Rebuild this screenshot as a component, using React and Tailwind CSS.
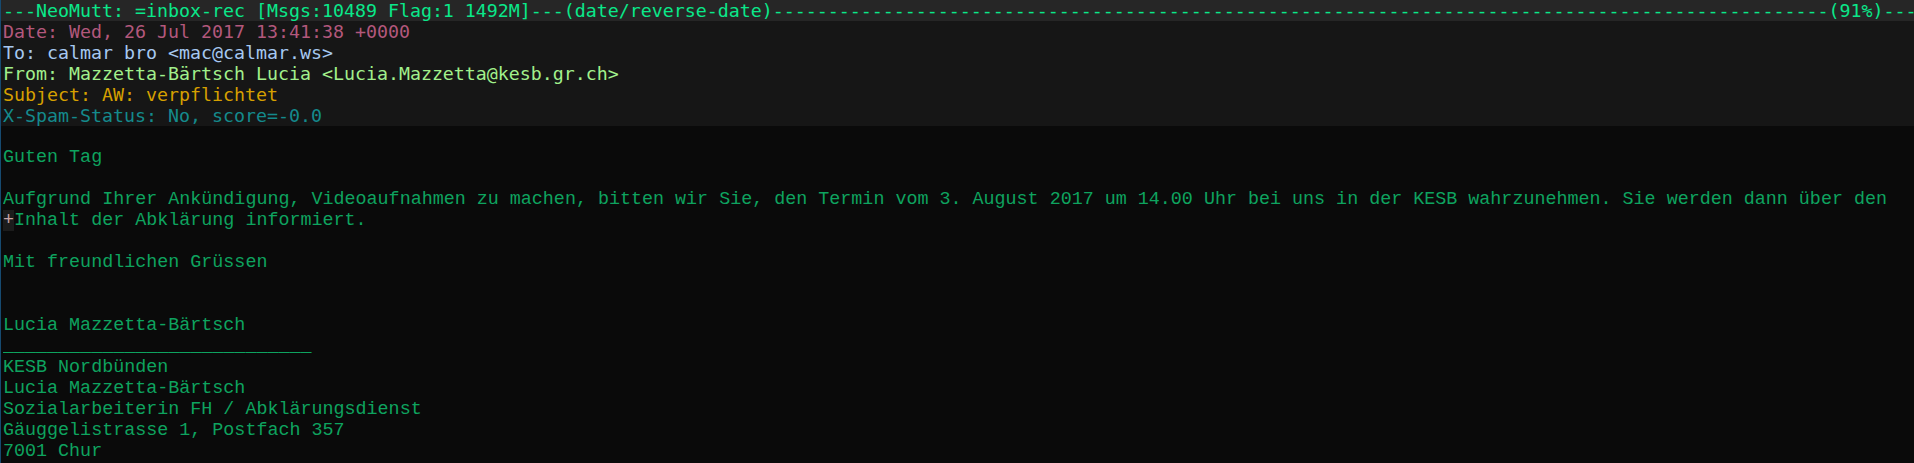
export default function App() {
  const status =
    "---NeoMutt: =inbox-rec [Msgs:10489 Flag:1 1492M]---(date/reverse-date)" +
    "-".repeat(96) +
    "(91%)---";
  const hdrFont = { fontFamily: '"DejaVu Sans Mono", monospace' };
  const row = "h-[21px] leading-[21px] whitespace-pre overflow-hidden";
  const body = [
    "",
    "Guten Tag",
    "",
    "Aufgrund Ihrer Ankündigung, Videoaufnahmen zu machen, bitten wir Sie, den Termin vom 3. August 2017 um 14.00 Uhr bei uns in der KESB wahrzunehmen. Sie werden dann über den",
    "+",
    "",
    "Mit freundlichen Grüssen",
    "",
    "",
    "Lucia Mazzetta-Bärtsch",
    "____________________________",
    "KESB Nordbünden",
    "Lucia Mazzetta-Bärtsch",
    "Sozialarbeiterin FH / Abklärungsdienst",
    "Gäuggelistrasse 1, Postfach 357",
    "7001 Chur",
  ];
  return (
    <div className="w-[1914px] h-[463px] bg-[#0a0a0a] border-l border-[#164a70] overflow-hidden text-[18.38px] font-['Liberation_Mono',monospace]">
      <div className={`${row} text-[18.28px] bg-[#262626] text-[#0ae88a] pl-[2px]`} style={hdrFont}>
        {status}
      </div>
      <div className="bg-[#161616] pl-[2px] text-[18.28px]" style={hdrFont}>
        <div className={`${row} text-[#b3587c]`}>Date: Wed, 26 Jul 2017 13:41:38 +0000</div>
        <div className={`${row} text-[#a6c8f0]`}>To: calmar bro &lt;mac@calmar.ws&gt;</div>
        <div className={`${row} text-[#a2f08c]`}>From: Mazzetta-Bärtsch Lucia &lt;Lucia.Mazzetta@kesb.gr.ch&gt;</div>
        <div className={`${row} text-[#d6a000]`}>Subject: AW: verpflichtet</div>
        <div className={`${row} text-[#148a8c]`}>X-Spam-Status: No, score=-0.0</div>
      </div>
      <div className="pl-[2px] text-[#0ea35f]">
        {body.map((l, i) =>
          l === "+" ? (
            <div key={i} className={row}>
              <span className="bg-[#1c1c1c] text-[#c9a3a6]">+</span>
              Inhalt der Abklärung informiert.
            </div>
          ) : (
            <div key={i} className={row}>
              {l || " "}
            </div>
          )
        )}
      </div>
    </div>
  );
}
